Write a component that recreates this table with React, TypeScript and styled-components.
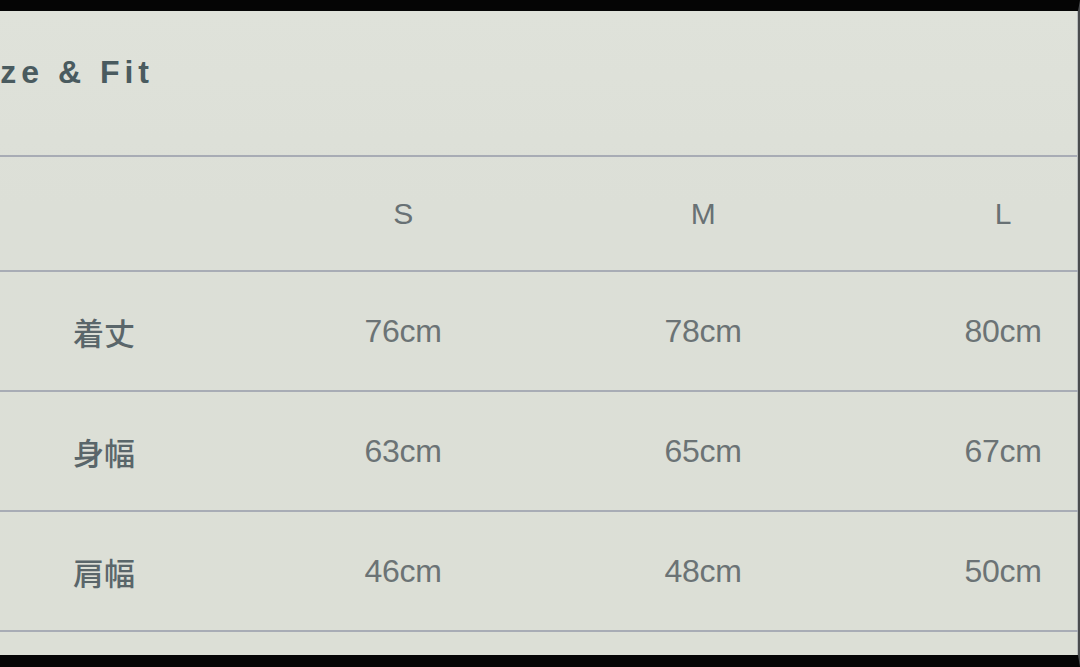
import * as React from 'react';
import styled, { createGlobalStyle } from 'styled-components';

const GlobalStyle = createGlobalStyle`
  html, body {
    margin: 0;
    padding: 0;
    background: #000;
  }
  body {
    width: 1080px;
    height: 667px;
    overflow: hidden;
  }
`;

const Frame = styled.div`
  box-sizing: border-box;
  width: 1080px;
  height: 667px;
  border-top: 11px solid #050505;
  border-bottom: 12px solid #050505;
  border-right: 2px solid #4a4c4e;
  background: #dcdfd7;
  overflow: hidden;
`;

const Panel = styled.div`
  height: 100%;
  border-right: 1px solid #b9bdbd;
  background: linear-gradient(180deg, #dfe2da 0%, #dcdfd7 30%, #dcdfd6 100%);
`;

const TitleBar = styled.div`
  box-sizing: border-box;
  height: 146px;
  padding-top: 45px;
  border-bottom: 2px solid #a8acb5;
`;

const Title = styled.h2`
  margin: 0 0 0 -40px;
  font-family: 'Liberation Sans', Arial, sans-serif;
  font-size: 32px;
  line-height: 32px;
  font-weight: 700;
  letter-spacing: 5px;
  color: #4a5b5f;
  white-space: nowrap;
`;

const Row = styled.div<{ $height: number }>`
  box-sizing: border-box;
  display: grid;
  grid-template-columns: 253px repeat(3, 300px);
  align-items: center;
  height: ${p => p.$height}px;
  border-bottom: 2px solid #a8acb5;
  width: 1153px;
`;

const Label = styled.div`
  padding-left: 73px;
  font-family: 'Noto Sans CJK JP', 'Noto Sans CJK SC', sans-serif;
  font-size: 31px;
  font-weight: 500;
  color: #5a666a;
  line-height: 1;
`;

const Cell = styled.div<{ $head?: boolean }>`
  text-align: center;
  font-family: 'Liberation Sans', Arial, sans-serif;
  font-size: ${p => (p.$head ? 30 : 32)}px;
  color: ${p => (p.$head ? '#687174' : '#6b7375')};
  line-height: 1;
  letter-spacing: -0.3px;
`;

const Filler = styled.div`
  height: 23px;
`;

const sizes = ['S', 'M', 'L'];

const rows = [
  { label: '着丈', values: ['76cm', '78cm', '80cm'] },
  { label: '身幅', values: ['63cm', '65cm', '67cm'] },
  { label: '肩幅', values: ['46cm', '48cm', '50cm'] },
];

const App: React.FC = () => {
  return (
    <>
      <GlobalStyle />
      <Frame>
        <Panel>
          <TitleBar>
            <Title>Size &amp; Fit</Title>
          </TitleBar>
          <Row $height={115}>
            <Label />
            {sizes.map(s => (
              <Cell key={s} $head>
                {s}
              </Cell>
            ))}
          </Row>
          {rows.map(r => (
            <Row key={r.label} $height={120}>
              <Label>{r.label}</Label>
              {r.values.map(v => (
                <Cell key={v}>{v}</Cell>
              ))}
            </Row>
          ))}
          <Filler />
        </Panel>
      </Frame>
    </>
  );
};

export default App;
